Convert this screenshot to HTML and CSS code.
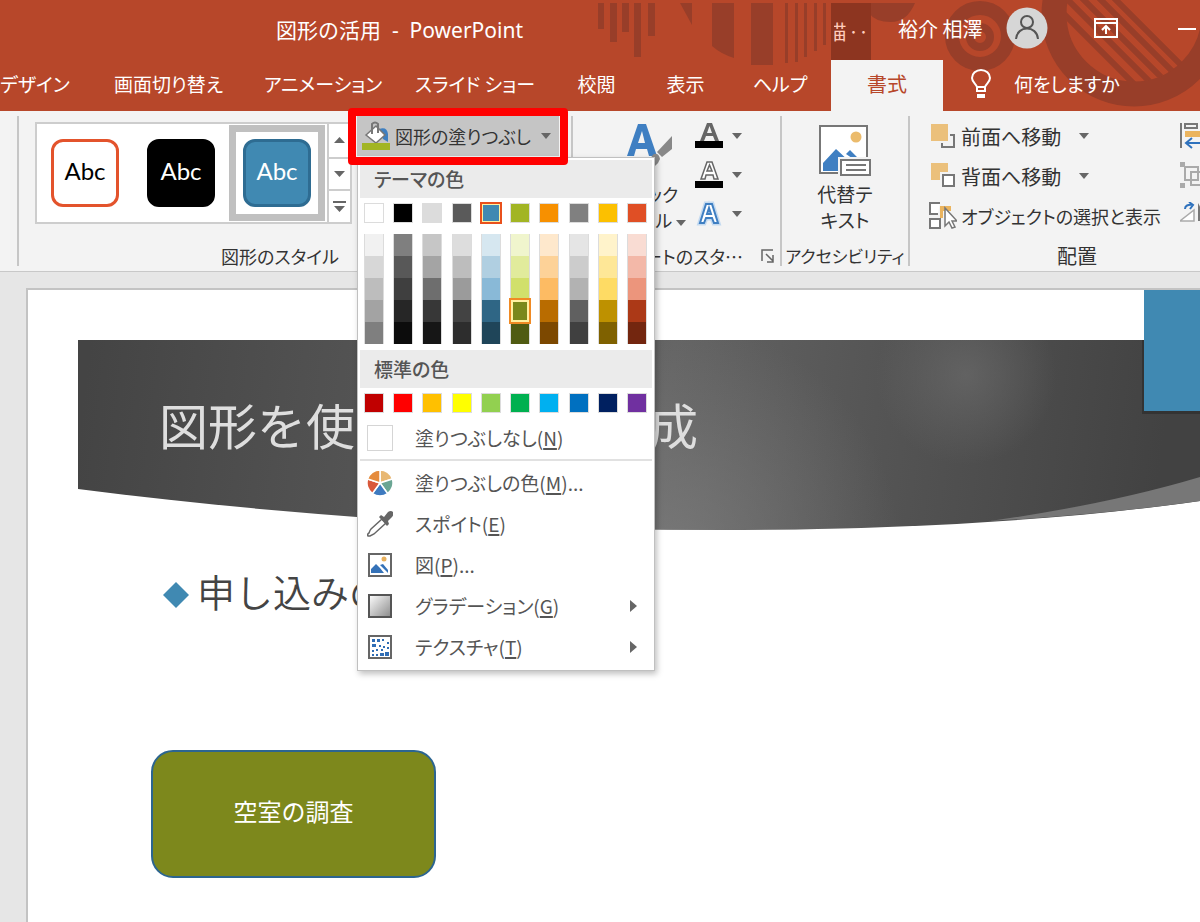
FILE: index.html
```html
<!DOCTYPE html>
<html lang="ja">
<head>
<meta charset="utf-8">
<title>図形の活用 - PowerPoint</title>
<link rel="stylesheet" href="styles.css">
</head>
<body>
<header class="header">
  <svg class="header-art" width="604" height="111" viewBox="596 0 604 111" aria-hidden="true">
    <defs><clipPath id="disc"><circle cx="1134" cy="14" r="68"/></clipPath></defs>
    <g fill="#983e29">
      <path d="M598 3h6v26h-6zM610 3h7v39h-7zM622 3h7v29h-7zM634 3h7v54h-7zM648 3h7v33h-7zM680 3h12v22zM712 3h22v55q-13-4-22-12zM751 3h22v62h-22zM785 3h3v60h-3zM795 3h3v59h-3zM804 3h3v54h-3zM814 3h3v48h-3zM823 3h3v42h-3zM869 3h46q-8 19-24 19t-22-9z"/>
    </g>
    <circle cx="980" cy="36" r="28" fill="none" stroke="#983e29" stroke-width="14"/>
    <circle cx="980" cy="37" r="10" fill="none" stroke="#983e29" stroke-width="8"/>
    <circle cx="1134" cy="14" r="80" fill="none" stroke="#983e29" stroke-width="25"/>
    <path clip-path="url(#disc)" d="M1040-10l110 110M1058-10l110 110M1074-10l110 110M1091-10l110 110M1106-10l110 110" stroke="#983e29" stroke-width="6"/>
  </svg>
  <div class="titlebar">
    <h1 class="doc-title">図形の活用&nbsp; -&nbsp; PowerPoint</h1>
    <div class="context-label"><span class="context-glyph">描</span><span>‥</span></div>
    <div class="window-tools">
      <span class="user-name">裕介 相澤</span>
      <svg class="avatar" width="42" height="42" viewBox="0 0 42 42" aria-hidden="true"><circle cx="21" cy="21" r="20.500" fill="#d6d6d6"/><g fill="none" stroke="#555" stroke-width="2"><circle cx="21" cy="15" r="6"/><path d="M10 32c1-14 21-14 22 0"/></g></svg>
      <button class="icon-button display-options" aria-label="リボンの表示オプション"><svg width="24" height="20" viewBox="0 0 24 20" fill="none" stroke="#fff" stroke-width="2"><path d="M1 1h22v18H1zM1 5h22M12 16V8M8 12l4-4 4 4"/></svg></button>
      <button class="icon-button minimize" aria-label="最小化"><svg width="18" height="20" viewBox="0 0 18 20"><path d="M0 11h18" stroke="#fff" stroke-width="2"/></svg></button>
    </div>
  </div>
  <nav class="tabs" aria-label="リボン タブ">
    <button class="tab tab-first">デザイン</button>
    <button class="tab">画面切り替え</button>
    <button class="tab">アニメーション</button>
    <button class="tab">スライド ショー</button>
    <button class="tab">校閲</button>
    <button class="tab">表示</button>
    <button class="tab">ヘルプ</button>
    <button class="tab tab-active">書式</button>
    <button class="tab tell-me"><svg width="20" height="30" viewBox="0 0 20 30" fill="none" stroke="#fff" stroke-width="2"><path d="M6 22v-4c-1-3-5-5-5-9a9 8 0 0 1 18 0c0 4-4 6-5 9v4zM6 18h8M7 26h6v2H7z"/></svg><span>何をしますか</span></button>
  </nav>
</header>

<section class="ribbon" aria-label="書式">
  <div class="group group-stub"></div>
  <div class="group group-shapes">
    <div class="group-body">
      <div class="gallery">
        <button class="style-cell"><span class="style-chip chip-outline">Abc</span></button>
        <button class="style-cell"><span class="style-chip chip-black">Abc</span></button>
        <button class="style-cell style-selected"><span class="style-chip chip-blue">Abc</span></button>
        <div class="gallery-scroll">
          <button aria-label="上へ"><svg width="11" height="6" viewBox="0 0 11 6"><path d="M0 6L5.500 0 11 6z" fill="#666"/></svg></button>
          <button aria-label="下へ"><svg width="11" height="6" viewBox="0 0 11 6"><path d="M0 0h11L5.500 6z" fill="#666"/></svg></button>
          <button aria-label="その他"><svg width="13" height="12" viewBox="0 0 13 12"><path d="M0 0h13v2H0zM1 5h11L6.500 11z" fill="#666"/></svg></button>
        </div>
      </div>
      <div class="fill-control">
        <button class="fill-button" aria-haspopup="menu" aria-expanded="true">
          <svg width="28" height="30" viewBox="0 0 28 30"><path d="M17 8q8-3 9 5v8l-5-3z" fill="#3e7fc1"/><path d="M4 14L14 5l9 9-9 8z" fill="#fff" stroke="#777" stroke-width="1.500"/><path d="M10 13V3q3-3 6 0v9" fill="none" stroke="#777" stroke-width="2"/><path d="M0 22h28v7H0z" fill="#a2b524"/></svg>
          <span>図形の塗りつぶし</span>
          <svg class="caret" width="10" height="6" viewBox="0 0 10 6"><path d="M0 0h10L5 6z"/></svg>
        </button>
        <span class="callout"></span>
        <div class="menu" role="menu">
          <h2 class="menu-heading">テーマの色</h2>
          <div class="swatches">
            <button class="swatch white" aria-label="白"></button><button class="swatch black" aria-label="黒"></button><button class="swatch silver" aria-label="薄い灰色"></button><button class="swatch slate" aria-label="濃い灰色"></button><button class="swatch blue picked" aria-label="青"></button><button class="swatch lime" aria-label="黄緑"></button><button class="swatch orange" aria-label="オレンジ"></button><button class="swatch gray" aria-label="灰色"></button><button class="swatch gold" aria-label="ゴールド"></button><button class="swatch red" aria-label="赤"></button>
          </div>
          <div class="ramps" id="ramps"></div>
          <h2 class="menu-heading">標準の色</h2>
          <div class="swatches" id="standard"></div>
          <button class="menu-item" role="menuitem"><span class="no-fill"></span><span>塗りつぶしなし(<u>N</u>)</span></button>
          <hr class="menu-rule">
          <button class="menu-item" role="menuitem">
            <svg width="26" height="26" viewBox="0 0 26 26"><g stroke="#fff" stroke-width="1.500"><path d="M13 13V0A13 13 0 0 1 25.400 9z" fill="#e8b873"/><path d="M13 13L25.400 9A13 13 0 0 1 20.600 23.500z" fill="#6aa593"/><path d="M13 13L20.600 23.500A13 13 0 0 1 5.400 23.500z" fill="#3e7abf"/><path d="M13 13L5.400 23.500A13 13 0 0 1 .6 9z" fill="#d9583a"/><path d="M13 13L.6 9A13 13 0 0 1 13 0z" fill="#e58b3c"/></g></svg>
            <span>塗りつぶしの色(<u>M</u>)...</span></button>
          <button class="menu-item" role="menuitem">
            <svg width="26" height="28" viewBox="0 0 26 28"><path d="M15 9l4 4L7 24q-2 1-4 2l-2 0q-1-2 1-3 1-3 2-4z" fill="#fff" stroke="#666" stroke-width="1.500"/><path d="M12 7l2-2 3 2 4-5q3-2 5 0 1 3-1 5l-4 4 1 3-2 2z" fill="#666"/></svg>
            <span>スポイト(<u>E</u>)</span></button>
          <button class="menu-item" role="menuitem">
            <svg width="24" height="24" viewBox="0 0 24 24"><path d="M1 1h22v22H1z" fill="#fff" stroke="#666" stroke-width="2"/><circle cx="16" cy="6" r="2.500" fill="#e8b05c"/><path d="M3 20v-4l5-5 4 4 4 5zM12 12l3-1 5 6v3z" fill="#3572b8"/></svg>
            <span>図(<u>P</u>)...</span></button>
          <button class="menu-item" role="menuitem">
            <svg width="24" height="24" viewBox="0 0 24 24"><defs><linearGradient id="g1" x2="1" y2="1"><stop stop-color="#fff"/><stop offset="1" stop-color="#8a8a8a"/></linearGradient></defs><path d="M1 1h22v22H1z" fill="url(#g1)" stroke="#555" stroke-width="2"/></svg>
            <span>グラデーション(<u>G</u>)</span><svg class="submenu" width="7" height="12" viewBox="0 0 7 12"><path d="M0 0l7 6-7 6z"/></svg></button>
          <button class="menu-item" role="menuitem">
            <svg width="24" height="24" viewBox="0 0 24 24"><path d="M1 1h22v22H1z" fill="#fff" stroke="#666" stroke-width="2"/><path d="M4 4h3v3H4zM9 4h3v3H9zM4 9h4v3H4zM14 4h2v2h-2zM19 7h2v2h-2zM11 10h2v2h-2zM15 11h2v2h-2zM19 12h2v2h-2zM4 15h2v2H4zM8 14h2v2H8zM12 18h4v3h-4zM17 17h4v4h-4zM8 19h2v2H8zM4 19h2v2H4zM13 14h2v2h-2z" fill="#2f6db5"/></svg>
            <span>テクスチャ(<u>T</u>)</span><svg class="submenu" width="7" height="12" viewBox="0 0 7 12"><path d="M0 0l7 6-7 6z"/></svg></button>
        </div>
      </div>
    </div>
    <div class="group-label">図形のスタイル</div>
  </div>

  <div class="group group-wordart">
    <div class="group-body">
      <button class="big-button quick-style">
        <svg width="54" height="54" viewBox="0 0 54 54"><path fill-rule="evenodd" d="M7 33L18 1h8l11 32h-8l-2-7H16l-2 7zm11-13h7L22 8z" fill="#3f7fc2"/><path d="M52 13v13l-10 8-5-5zM34 31q5-1 6 5-3 9-13 9 4-3 3-7 1-5 4-7z" fill="#888"/></svg>
        <span>クイック<br>スタイル <svg class="caret" width="10" height="6" viewBox="0 0 10 6"><path d="M0 0h10L5 6z"/></svg></span>
      </button>
      <div class="text-tools">
        <button aria-label="文字の塗りつぶし"><svg width="28" height="28" viewBox="0 0 28 28"><path fill-rule="evenodd" d="M5 19L12 1h5l7 18h-4l-2-5h-7l-2 5zm7-8h5l-2.500-7z" fill="#666"/><path d="M0 19h28v7H0z" fill="#000"/></svg><svg class="caret" width="10" height="6" viewBox="0 0 10 6"><path d="M0 0h10L5 6z"/></svg></button>
        <button aria-label="文字の輪郭"><svg width="28" height="28" viewBox="0 0 28 28"><path fill-rule="evenodd" d="M6 18L12 1h5l6 17h-4l-1-4h-7l-1 4zm6-8h5l-2.500-6z" fill="#fff" stroke="#666" stroke-width="1.500"/><path d="M0 20h28v7H0z" fill="#000"/></svg><svg class="caret" width="10" height="6" viewBox="0 0 10 6"><path d="M0 0h10L5 6z"/></svg></button>
        <button aria-label="文字の効果"><svg width="28" height="28" viewBox="0 0 28 28"><path fill-rule="evenodd" d="M5 23L11 4h6l6 19h-4l-2-5h-6l-2 5zm7-9h4l-2-6z" fill="#fff" stroke="#c4daf0" stroke-width="5"/><path fill-rule="evenodd" d="M5 23L11 4h6l6 19h-4l-2-5h-6l-2 5zm7-9h4l-2-6z" fill="#fff" stroke="#3f7fc2" stroke-width="2"/></svg><svg class="caret" width="10" height="6" viewBox="0 0 10 6"><path d="M0 0h10L5 6z"/></svg></button>
      </div>
    </div>
    <div class="group-label">ワードアートのスタ…<button class="launcher" aria-label="詳細"><svg width="14" height="14" viewBox="0 0 14 14" fill="none" stroke="#666" stroke-width="1.500"><path d="M1 12V1h11M5 5l7 7M12 6v7H6"/></svg></button></div>
  </div>

  <div class="group group-alt">
    <button class="big-button alt-button">
      <svg width="52" height="52" viewBox="0 0 52 52"><path d="M1 1h47v47H1z" fill="#fff" stroke="#777" stroke-width="2"/><circle cx="37" cy="12" r="5.500" fill="#ebbb6c"/><path d="M4 46V38L17 24l15 14v8zM27 29l4-4 9 9v4z" fill="#3f7fc2"/><path d="M21 34h30v17H21z" fill="#fff" stroke="#f3f3f3" stroke-width="4"/><path d="M22 35h29v15H22zM27 40h20M27 45h20" fill="#fff" stroke="#777" stroke-width="2"/></svg>
      <span>代替テ<br>キスト</span>
    </button>
    <div class="group-label">アクセシビリティ</div>
  </div>

  <div class="group group-arrange">
    <div class="group-body">
      <div class="arrange-list">
        <button><svg width="28" height="28" viewBox="0 0 28 28"><path d="M2 2h17v17H2z" fill="#ebc07b"/><path d="M21 13h4v12H13v-4" fill="none" stroke="#777" stroke-width="2"/></svg><span>前面へ移動</span><svg class="caret" width="10" height="6" viewBox="0 0 10 6"><path d="M0 0h10L5 6z"/></svg></button>
        <button><svg width="28" height="28" viewBox="0 0 28 28"><path d="M2 1h17v17H2z" fill="#ebc07b"/><path d="M13 12h13v13H13z" fill="#fff" stroke="#f3f3f3" stroke-width="4"/><path d="M14 13h11v11H14z" fill="#fff" stroke="#777" stroke-width="2"/></svg><span>背面へ移動</span><svg class="caret" width="10" height="6" viewBox="0 0 10 6"><path d="M0 0h10L5 6z"/></svg></button>
        <button><svg width="28" height="28" viewBox="0 0 28 28"><path d="M9 12H1V1h10M1 17h10v9H1z" fill="#fff" stroke="#777" stroke-width="2"/><path d="M11 4h11v5h-8v7h-3z" fill="#ebb45e"/><path d="M16 6v18l4-4 3 6 3-1-3-6h5z" fill="#fff" stroke="#777" stroke-width="1.500"/></svg><span>オブジェクトの選択と表示</span></button>
      </div>
      <div class="arrange-icons">
        <button aria-label="配置"><svg width="28" height="28" viewBox="0 0 28 28"><path d="M1 1v25M5 2h12v4H5z" fill="none" stroke="#777" stroke-width="2"/><path d="M5 9h23v6H5z" fill="#ebb45e"/><path d="M28 21H6M12 16l-6 5 6 5" fill="none" stroke="#2f72bd" stroke-width="2"/></svg></button>
        <button aria-label="グループ化"><svg width="28" height="28" viewBox="0 0 28 28" fill="none" stroke="#aaa" stroke-width="2"><path d="M5 5h13v13H5zM11 10h14v13H11z"/><path d="M0 0h5v5H0zM0 21h5v5H0z" fill="#aaa" stroke="none"/></svg></button>
        <button aria-label="回転"><svg width="28" height="28" viewBox="0 0 28 28"><path d="M0 19L14 8v11z" fill="#fff" stroke="#aaa" stroke-width="1.500"/><path d="M18 1v18h10z" fill="#777"/><path d="M5 7q0-5 8-4M9 0l4 3-3 4" fill="none" stroke="#2f72bd" stroke-width="2"/></svg></button>
      </div>
    </div>
    <div class="group-label">配置</div>
  </div>
</section>

<main class="workspace">
  <article class="slide">
    <svg class="slide-art" width="1173" height="633" viewBox="27 289 1173 633" aria-hidden="true">
      <defs>
        <linearGradient id="band" gradientUnits="userSpaceOnUse" x1="90" y1="340" x2="1160" y2="470"><stop stop-color="#444"/><stop offset=".2" stop-color="#505050"/><stop offset=".54" stop-color="#636363"/><stop offset=".8" stop-color="#505050"/><stop offset="1" stop-color="#424242"/></linearGradient>
        <radialGradient id="low" gradientUnits="userSpaceOnUse" cx="670" cy="550" r="230"><stop stop-color="#808080" stop-opacity=".7"/><stop offset="1" stop-color="#808080" stop-opacity="0"/></radialGradient>
        <radialGradient id="spot" gradientUnits="userSpaceOnUse" cx="966" cy="375" r="90"><stop stop-color="#6a6a6a" stop-opacity=".7"/><stop offset="1" stop-color="#6a6a6a" stop-opacity="0"/></radialGradient>
      </defs>
      <g>
        <path d="M78 340H1200V501C910 542 480 541 78 489Z" fill="url(#band)"/>
        <path d="M78 340H1200V501C910 542 480 541 78 489Z" fill="url(#low)"/>
        <path d="M78 340H1200V501C910 542 480 541 78 489Z" fill="url(#spot)"/>
      </g>
      <path d="M990 521Q1110 504 1200 477V501Q1100 515 990 521z" fill="#777"/>
      <path d="M1142 340h58v74h-58z" fill="#333"/>
      <path d="M1144 290h56v121h-56z" fill="#4089b2"/>
      <path d="M163 595l13-13 13 13-13 13z" fill="#4089b2"/>
    </svg>
    <h2 class="slide-title">図形を使った資料の作成</h2>
    <p class="slide-text">申し込みの手順</p>
    <div class="slide-shape">空室の調査</div>
  </article>
</main>
<script src="palette.js"></script>
</body>
</html>
```
FILE: styles.css
```css
* { box-sizing: border-box; }
body {
  margin: 0;
  min-height: 100vh;
  display: flex;
  flex-direction: column;
  overflow: hidden;
  font-family: "Noto Sans CJK JP", sans-serif;
  font-size: 19px;
  font-feature-settings: "palt";
  color: #333;
  background: #e6e6e6;
}
button {
  font: inherit;
  font-feature-settings: inherit;
  color: inherit;
  background: none;
  border: 0;
  padding: 0;
  white-space: nowrap;
}
svg { display: block; flex: none; }
.caret, .submenu { fill: #666; }

/* Title bar and tabs */
.header { position: relative; background: #b7472a; color: #fff; }
.header-art { position: absolute; right: 0; top: 0; }
.titlebar {
  position: relative;
  display: grid;
  grid-template-columns: 831px 40px 1fr;
  height: 60px;
}
.doc-title {
  margin: 0;
  padding-right: 32px;
  text-align: center;
  font: 400 21px/60px "Noto Sans", "Noto Sans CJK JP", sans-serif;
  font-feature-settings: normal;
}
.context-label {
  display: flex;
  align-items: center;
  justify-content: center;
  gap: 2px;
  margin-top: 3px;
  background: #8d3520;
  color: #ffcdbd;
  font-size: 20px;
}
.context-glyph { display: flex; justify-content: flex-end; width: 13px; overflow: hidden; }
.window-tools { display: flex; align-items: center; padding: 0 4px 4px 27px; }
.user-name { font-size: 20px; white-space: nowrap; }
.avatar { margin-left: 24px; }
.icon-button { display: flex; }
.display-options { margin-left: 46px; }
.minimize { margin-left: auto; }
.tabs {
  position: relative;
  display: grid;
  grid-template-columns: 90px 157px 152px 152px 91px 87px 102px 112px 1fr;
  height: 51px;
}
.tab { text-align: center; padding-bottom: 4px; }
.tab-first { text-align: left; }
.tab-active { background: #f3f3f3; color: #b7472a; font-size: 20px; }
.tell-me { display: flex; align-items: center; gap: 23px; padding-left: 28px; }

/* Ribbon */
.ribbon {
  display: flex;
  height: 161px;
  padding: 5px 0;
  background: #f3f3f3;
  border-bottom: 1px solid #c8c8c8;
}
.group {
  display: flex;
  flex-direction: column;
  justify-content: space-between;
  flex: none;
  border-right: 2px solid #c6c6c6;
}
.group-stub { width: 19px; }
.group-shapes { width: 554px; }
.group-wordart { width: 209px; }
.group-alt { width: 128px; }
.group-arrange { flex: 1; min-width: 0; border: 0; }
.group-body { display: flex; }
.group-label { font-size: 18px; line-height: 20px; text-align: center; white-space: nowrap; }
.group-shapes .group-body { padding-left: 16px; gap: 5px; }
.group-shapes .group-label { padding-right: 30px; }
.group-alt .group-label { font-size: 17px; }
.group-arrange .group-label { padding-left: 44px; font-size: 20px; }

.gallery {
  display: flex;
  width: 317px;
  height: 102px;
  margin-top: 6px;
  background: #fff;
  border: 2px solid #cdcdcd;
}
.style-cell {
  display: grid;
  place-items: center;
  width: 96px;
  height: 96px;
  margin-top: 1px;
  border: 7px solid transparent;
}
.style-selected { border-color: #c0c0c0; }
.style-chip {
  width: 68px;
  height: 68px;
  border: 3px solid;
  border-radius: 12px;
  font: 400 24px/58px Lato, sans-serif;
}
.chip-outline { border-color: #e3532c; color: #000; }
.chip-black { background: #000; border-color: #000; color: #fff; }
.chip-blue { background: #4089b2; border-color: #2e6c92; color: #fff; }
.gallery-scroll {
  flex: 1;
  display: grid;
  grid-template-rows: repeat(3, 1fr);
  margin-left: 2px;
  border-left: 2px solid #cdcdcd;
}
.gallery-scroll button { display: grid; place-items: center; }
.gallery-scroll button + button { border-top: 2px solid #cdcdcd; }

.fill-control { position: relative; }
.fill-button {
  display: flex;
  align-items: center;
  gap: 5px;
  width: 202px;
  height: 40px;
  padding-left: 5px;
  background: #c5c5c5;
}
.fill-button span { font-size: 18px; }
.fill-button .caret { margin-left: auto; margin-right: 8px; }
.callout {
  position: absolute;
  z-index: 3;
  inset: -8px auto auto -9px;
  width: 220px;
  height: 57px;
  border: 8px solid #f00;
  border-radius: 4px;
}

/* Drop-down menu */
.menu {
  position: absolute;
  z-index: 2;
  top: 41px;
  left: 0;
  width: 298px;
  padding: 2px;
  background: #fff;
  border: 1px solid #c0c0c0;
  box-shadow: 2px 3px 6px rgba(0, 0, 0, .25);
  color: #555;
}
.menu-heading {
  margin: 0;
  padding-left: 14px;
  font-size: 19px;
  font-weight: 500;
  line-height: 38px;
  background: #ebebeb;
}
.swatches, .ramps { display: flex; justify-content: space-between; padding: 5px 5px 5px 4px; }
.ramps { padding-top: 6px; padding-bottom: 6px; }
.swatch { width: 20px; height: 20px; border: 1px solid #dcdcdc; }
.ramp { width: 20px; border: 1px solid #dcdcdc; border-width: 0 1px; }
.shade { display: block; width: 100%; height: 22px; }
.white { background: #fff; }
.black { background: #000; }
.silver { background: #dcdcdc; }
.slate { background: #5a5a5a; }
.blue { background: #4089b2; }
.lime { background: #a2b524; }
.orange { background: #f79000; }
.gray { background: #808080; }
.gold { background: #fcc000; }
.red { background: #e04f25; }
.picked { border: 2px solid #fff0a0; outline: 2px solid #e9501c; outline-offset: -1px; }
.shade.picked { outline-color: #f08a24; outline-offset: 0; position: relative; }
.menu-item {
  display: flex;
  align-items: center;
  width: 100%;
  height: 41px;
  padding: 0 0 2px 7px;
  font-size: 19px;
}
.menu-item > :first-child { flex: none; width: 26px; margin-right: 22px; }
.menu-item u { text-underline-offset: 2px; text-decoration-thickness: 2px; }
.no-fill { height: 26px; border: 1px solid #d5d5d5; }
.submenu { margin-left: auto; margin-right: 15px; }
.menu-rule { margin: 0 0 2px; border: 0; border-top: 2px solid #e1e1e1; }

/* WordArt, accessibility and arrange groups */
.big-button { display: flex; flex-direction: column; align-items: center; font-size: 19px; line-height: 26px; }
.quick-style { width: 118px; padding: 7px 4px 0 34px; gap: 4px; font-size: 18px; }
.quick-style .caret { display: inline-block; vertical-align: middle; }
.text-tools { display: grid; grid-template-rows: repeat(3, 39px); padding: 0 0 0 4px; }
.text-tools button { display: flex; align-items: center; gap: 9px; }
.group-wordart .group-label { display: flex; align-items: center; justify-content: flex-end; gap: 18px; padding-right: 5px; }
.alt-button { padding-top: 9px; gap: 4px; }
.arrange-list { display: grid; grid-template-rows: repeat(3, 40px); padding: 0 0 0 19px; width: 270px; flex: none; }
.arrange-list button { display: flex; align-items: center; gap: 4px; font-size: 20px; }
.arrange-list button:last-child { font-size: 18px; }
.arrange-list .caret { margin-left: 14px; }
.arrange-icons { display: grid; grid-template-rows: repeat(3, 40px); align-items: center; }

/* Slide */
.workspace { flex: 1; display: flex; padding: 16px 0 0 26px; }
.slide {
  position: relative;
  flex: 1;
  min-height: 634px;
  overflow: hidden;
  background: #fff;
  border: solid #c3c3c3;
  border-width: 2px 0 0 2px;
  font-feature-settings: normal;
}
.slide-art { position: absolute; left: -1px; top: -1px; }
.slide-title {
  position: absolute;
  left: 131px;
  top: 98px;
  margin: 0;
  font-size: 49px;
  font-weight: 400;
  line-height: 72px;
  color: #dedede;
  white-space: nowrap;
}
.slide-text { position: absolute; left: 169px; top: 273px; margin: 0; font-size: 38px; font-weight: 350; line-height: 56px; color: #444; white-space: nowrap; }
.slide-shape {
  position: absolute;
  left: 123px;
  top: 460px;
  display: grid;
  place-items: center;
  width: 285px;
  height: 128px;
  padding-bottom: 8px;
  background: #7d881c;
  border: 2px solid #2c6590;
  border-radius: 22px;
  color: #fff;
  font-size: 24px;
}
```
FILE: palette.js
```js
const ramps = [
  ["#f1f1f1", "#d7d7d7", "#bdbdbd", "#a3a3a3", "#7f7f7f"],
  ["#7f7f7f", "#585858", "#3f3f3f", "#262626", "#0c0c0c"],
  ["#c6c6c6", "#a4a4a4", "#6e6e6e", "#373737", "#161616"],
  ["#dddddd", "#bdbdbd", "#9b9b9b", "#434343", "#2d2d2d"],
  ["#d6e7f0", "#b0cfe1", "#89b9d7", "#2f6685", "#1f4559"],
  ["#f0f5cd", "#e1eb9c", "#d1e06b", "#7a881b", "#505b12"],
  ["#fee8cc", "#fdd298", "#fdbb63", "#b96c00", "#7c4800"],
  ["#e5e5e5", "#cccccc", "#b2b2b2", "#606060", "#404040"],
  ["#fff3cb", "#fee797", "#fedb64", "#be9100", "#7f6100"],
  ["#f9dcd3", "#f3b8a8", "#ec957c", "#ac3917", "#73260f"]
];
const standard = ["#c00000", "#ff0000", "#ffc000", "#ffff00", "#92d050", "#00b050", "#00b0f0", "#0070c0", "#002060", "#7030a0"];

function colorButton(color, className) {
  const button = document.createElement("button");
  button.className = className;
  button.style.backgroundColor = color;
  button.setAttribute("aria-label", color);
  return button;
}

const rampBox = document.getElementById("ramps");
ramps.forEach((colors, column) => {
  const ramp = document.createElement("div");
  ramp.className = "ramp";
  colors.forEach((color, row) => {
    const picked = column === 5 && row === 3;
    ramp.append(colorButton(color, picked ? "shade picked" : "shade"));
  });
  rampBox.append(ramp);
});

const standardBox = document.getElementById("standard");
standard.forEach(color => standardBox.append(colorButton(color, "swatch")));
```
